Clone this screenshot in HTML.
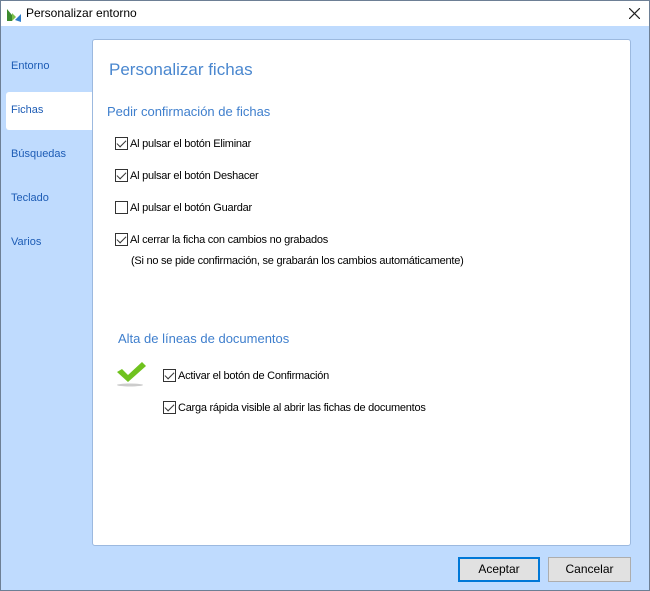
<!DOCTYPE html>
<html><head><meta charset="utf-8"><style>
*{margin:0;padding:0;box-sizing:border-box}
body{width:650px;height:591px;position:relative;overflow:hidden;font-family:"Liberation Sans",sans-serif;font-size:12px;background:#bfdbfe;}
.frame{position:absolute;inset:0;border:1px solid #6d7f95;}
.title{position:absolute;left:0;top:0;width:650px;height:26px;background:#fff;border:1px solid #6d7f95;border-bottom:none}
.title span{position:absolute;left:25px;top:5px;font-size:12px;color:#000}
.nav{position:absolute;left:11px;font-size:11px;color:#1d5cb5}
.seltab{position:absolute;left:6px;top:92px;width:87px;height:38px;background:#fff;border-radius:3px 0 0 3px}
.panel{position:absolute;left:92px;top:39px;width:539px;height:507px;background:#fff;border:1px solid #9cb9df;border-radius:3px}
.t{position:absolute;color:#3f7fcd}
.cb{position:absolute;font-size:11px;color:#000;white-space:nowrap;letter-spacing:-0.25px}
.cb i{display:inline-block;width:13px;height:13px;border:1px solid #333;background:#fff;vertical-align:-3px;margin-right:2px;position:relative}
.cb i.c:after{content:"";position:absolute;left:3px;top:0px;width:4px;height:8px;border:solid #333;border-width:0 1.5px 1.5px 0;transform:rotate(45deg)}
.btn{position:absolute;top:557px;height:25px;background:#e1e1e1;border:1px solid #adadad;text-align:center;line-height:23px;font-size:12px}
</style></head><body>
<div class="frame"></div>
<div class="title">
<svg style="position:absolute;left:5px;top:6px" width="16" height="16"><path d="M1 2 L6 8 L6 14 L1 14Z" fill="#3c8a2e"/><path d="M6 6 L10 10 L6 14Z" fill="#7cc04a"/><path d="M15 7 L15 15 L9 13Z" fill="#2e7cc9"/></svg>
<span>Personalizar entorno</span>
<svg style="position:absolute;left:628px;top:7px" width="11" height="11"><path d="M0 0L11 11M11 0L0 11" stroke="#222" stroke-width="1.2"/></svg></div>
<div class="seltab"></div>
<div class="nav" style="top:60px">Entorno</div>
<div class="nav" style="top:104px">Fichas</div>
<div class="nav" style="top:148px">Búsquedas</div>
<div class="nav" style="top:192px">Teclado</div>
<div class="nav" style="top:236px">Varios</div>
<div class="panel"></div>
<div class="t" style="left:109px;top:60px;font-size:17px;color:#4a87cf">Personalizar fichas</div>
<div class="t" style="left:107px;top:104px;font-size:13px">Pedir confirmación de fichas</div>
<div class="cb" style="left:115px;top:137px"><i class="c"></i>Al pulsar el botón Eliminar</div>
<div class="cb" style="left:115px;top:169px"><i class="c"></i>Al pulsar el botón Deshacer</div>
<div class="cb" style="left:115px;top:201px"><i></i>Al pulsar el botón Guardar</div>
<div class="cb" style="left:115px;top:233px"><i class="c"></i>Al cerrar la ficha con cambios no grabados</div>
<div class="cb" style="left:131px;top:255px">(Si no se pide confirmación, se grabarán los cambios automáticamente)</div>
<div class="t" style="left:118px;top:331px;font-size:13px">Alta de líneas de documentos</div>
<svg style="position:absolute;left:116px;top:360px" width="32" height="28"><ellipse cx="14" cy="25" rx="13" ry="1.5" fill="#ccc"/><path d="M1 12 L6 9 L12 15 L26 2 L30 6 L12 22Z" fill="#6fc21e"/></svg>
<div class="cb" style="left:163px;top:369px"><i class="c"></i>Activar el botón de Confirmación</div>
<div class="cb" style="left:163px;top:401px"><i class="c"></i>Carga rápida visible al abrir las fichas de documentos</div>
<div class="btn" style="left:458px;width:82px;border:2px solid #0078d7;line-height:21px">Aceptar</div>
<div class="btn" style="left:548px;width:83px">Cancelar</div>
</body></html>
